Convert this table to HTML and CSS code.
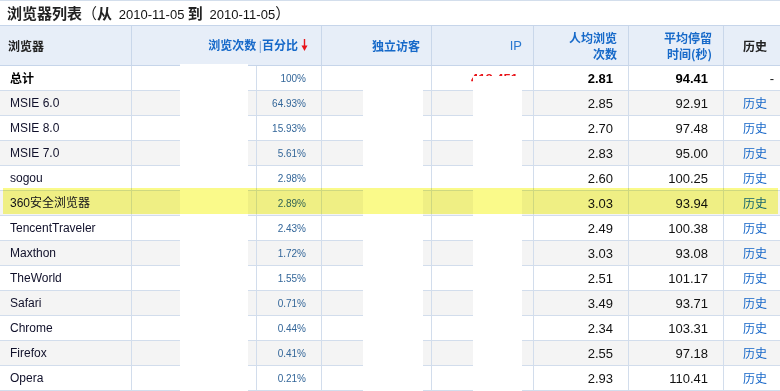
FILE: index.html
```html
<!DOCTYPE html>
<html lang="zh-CN">
<head>
<meta charset="utf-8">
<title>浏览器列表</title>
<link rel="stylesheet" href="styles.css">
</head>
<body>
<div class="panel">
  <h2 class="title">浏览器列表<span class="paren">（</span>从 &nbsp;<span class="date">2010-11-05</span> 到 &nbsp;<span class="date">2010-11-05</span><span class="paren">）</span></h2>
  <table class="grid">
    <colgroup>
      <col class="c-name"><col class="c-pv"><col class="c-pct"><col class="c-uv"><col class="c-ip"><col class="c-avg"><col class="c-time"><col class="c-hist">
    </colgroup>
    <thead>
      <tr>
        <th class="h-name">浏览器</th>
        <th class="h-pv" colspan="2">浏览次数 <span class="sep">|</span>百分比<svg class="arrow" width="7" height="12" viewBox="0 0 7 12"><path d="M3.5 0v8" stroke="#e8141a" stroke-width="1.4"/><path d="M0.5 6.5h6L3.5 12z" fill="#e8141a"/></svg></th>
        <th class="h-num h-uv">独立访客</th>
        <th class="h-num h-ip">IP</th>
        <th class="h-num"><span class="ln">人均浏览</span><span class="ln">次数</span></th>
        <th class="h-num"><span class="ln">平均停留</span><span class="ln">时间(秒)</span></th>
        <th class="h-hist">历史</th>
      </tr>
    </thead>
    <tbody>
      <tr class="total"><td class="name">总计</td><td></td><td class="pct">100%</td><td></td><td class="num ipv">418,451</td><td class="num b">2.81</td><td class="num b">94.41</td><td class="dash">-</td></tr>
      <tr class="alt"><td class="name">MSIE 6.0</td><td></td><td class="pct">64.93%</td><td></td><td></td><td class="num">2.85</td><td class="num">92.91</td><td class="hist"><a href="#">历史</a></td></tr>
      <tr><td class="name">MSIE 8.0</td><td></td><td class="pct">15.93%</td><td></td><td></td><td class="num">2.70</td><td class="num">97.48</td><td class="hist"><a href="#">历史</a></td></tr>
      <tr class="alt"><td class="name">MSIE 7.0</td><td></td><td class="pct">5.61%</td><td></td><td></td><td class="num">2.83</td><td class="num">95.00</td><td class="hist"><a href="#">历史</a></td></tr>
      <tr><td class="name">sogou</td><td></td><td class="pct">2.98%</td><td></td><td></td><td class="num">2.60</td><td class="num">100.25</td><td class="hist"><a href="#">历史</a></td></tr>
      <tr class="alt"><td class="name">360安全浏览器</td><td></td><td class="pct">2.89%</td><td></td><td></td><td class="num">3.03</td><td class="num">93.94</td><td class="hist"><a href="#">历史</a></td></tr>
      <tr><td class="name">TencentTraveler</td><td></td><td class="pct">2.43%</td><td></td><td></td><td class="num">2.49</td><td class="num">100.38</td><td class="hist"><a href="#">历史</a></td></tr>
      <tr class="alt"><td class="name">Maxthon</td><td></td><td class="pct">1.72%</td><td></td><td></td><td class="num">3.03</td><td class="num">93.08</td><td class="hist"><a href="#">历史</a></td></tr>
      <tr><td class="name">TheWorld</td><td></td><td class="pct">1.55%</td><td></td><td></td><td class="num">2.51</td><td class="num">101.17</td><td class="hist"><a href="#">历史</a></td></tr>
      <tr class="alt"><td class="name">Safari</td><td></td><td class="pct">0.71%</td><td></td><td></td><td class="num">3.49</td><td class="num">93.71</td><td class="hist"><a href="#">历史</a></td></tr>
      <tr><td class="name">Chrome</td><td></td><td class="pct">0.44%</td><td></td><td></td><td class="num">2.34</td><td class="num">103.31</td><td class="hist"><a href="#">历史</a></td></tr>
      <tr class="alt"><td class="name">Firefox</td><td></td><td class="pct">0.41%</td><td></td><td></td><td class="num">2.55</td><td class="num">97.18</td><td class="hist"><a href="#">历史</a></td></tr>
      <tr><td class="name">Opera</td><td></td><td class="pct">0.21%</td><td></td><td></td><td class="num">2.93</td><td class="num">110.41</td><td class="hist"><a href="#">历史</a></td></tr>
    </tbody>
  </table>
  <div class="mask mask-pv"></div>
  <div class="mask mask-uv"></div>
  <div class="mask mask-ip"></div>
  <div class="marker"></div>
</div>
</body>
</html>
```

FILE: styles.css
```css
html, body {
  margin: 0;
  padding: 0;
  overflow: hidden;
  background: #fff;
}
body {
  font-family: "Liberation Sans", "Noto Sans CJK SC", sans-serif;
  color: #111;
}
.panel {
  position: relative;
  width: 786px;
  border-top: 1px solid #d3deec;
}
.title {
  margin: 0;
  height: 24px;
  padding-left: 7px;
  font-family: "Noto Sans CJK SC", sans-serif;
  font-size: 15px;
  font-weight: bold;
  line-height: 24px;
  color: #222;
  white-space: nowrap;
}
.title .date {
  font-family: "Liberation Sans", sans-serif;
  font-size: 13px;
  font-weight: normal;
  color: #111;
}
.title .paren { font-weight: normal; }
.grid {
  width: 786px;
  table-layout: fixed;
  border-collapse: separate;
  border-spacing: 0;
  border-top: 1px solid #c6d5ea;
}
.c-name { width: 131px; }
.c-pv { width: 125px; }
.c-pct { width: 65px; }
.c-uv { width: 110px; }
.c-ip { width: 102px; }
.c-avg { width: 95px; }
.c-time { width: 95px; }
.c-hist { width: 63px; }

th {
  box-sizing: border-box;
  height: 40px;
  background: #e7eef8;
  border-bottom: 1px solid #c6d5ea;
  border-left: 1px solid #c9d7ea;
  font-family: "Noto Sans CJK SC", sans-serif;
  font-size: 12px;
  font-weight: bold;
  line-height: 16px;
  color: #1669c9;
  padding: 0 11px 0 0;
  text-align: right;
  white-space: nowrap;
}
th .ln {
  display: block;
  line-height: 16px;
}
th.h-name {
  border-left: 0;
  text-align: left;
  padding-left: 8px;
  color: #222;
}
th.h-pv { padding-right: 13px; }
th.h-ip {
  font-family: "Liberation Sans", sans-serif;
  font-weight: normal;
  font-size: 13px;
  color: #2a78d0;
}
th.h-hist {
  text-align: center;
  color: #222;
  padding: 0;
}
.sep {
  font-weight: normal;
  color: #7aa3d6;
  font-family: "Liberation Sans", sans-serif;
}
.arrow {
  margin-left: 3px;
  vertical-align: -1px;
}

td {
  box-sizing: border-box;
  height: 25px;
  padding: 0 15px 0 0;
  border-bottom: 1px solid #d2ddec;
  border-left: 1px solid #d2ddec;
  font-size: 13px;
  text-align: right;
  white-space: nowrap;
  color: #111;
}
tr.alt td { background: #f4f4f4; }
td.name {
  border-left: 0;
  text-align: left;
  padding-left: 10px;
  font-size: 12px;
  line-height: 14px;
  color: #10102a;
}
tr.total td.name {
  font-family: "Noto Sans CJK SC", sans-serif;
  font-weight: bold;
  color: #000;
}
td.pct {
  font-size: 10px;
  color: #336699;
}
td.b { font-weight: bold; color: #000; }
td.ipv { color: #e8141a; font-weight: bold; }
td.dash { padding-right: 12px; }
td.hist {
  text-align: center;
  padding: 0;
  font-family: "Noto Sans CJK SC", sans-serif;
  font-size: 12px;
  line-height: 14px;
}
td.hist a {
  color: #1566c8;
  text-decoration: none;
}

.mask {
  position: absolute;
  background: #fff;
  bottom: 0;
}
.mask-pv { left: 180px; width: 68px; top: 63px; }
.mask-uv { left: 363px; width: 60px; top: 65px; }
.mask-ip { left: 473px; width: 49px; top: 75px; }

.marker {
  position: absolute;
  left: 3px;
  top: 187px;
  width: 775px;
  height: 26px;
  background: #fafa8a;
  mix-blend-mode: multiply;
}
```
